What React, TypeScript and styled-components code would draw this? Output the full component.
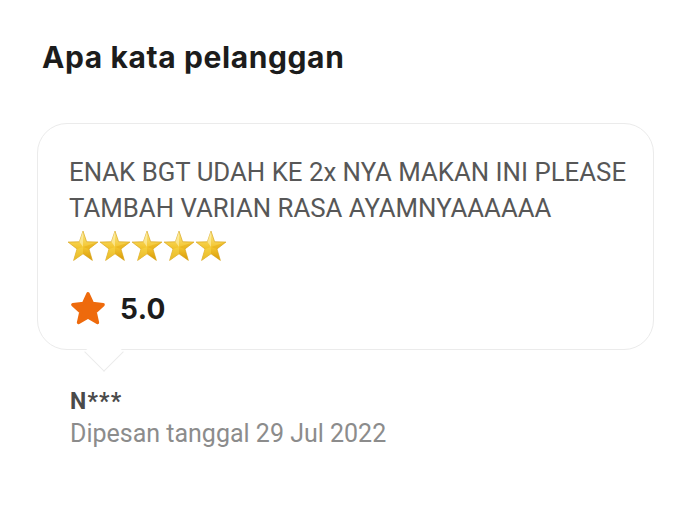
import React from 'react';
import styled, { createGlobalStyle } from 'styled-components';

const GlobalStyle = createGlobalStyle`
  html, body {
    margin: 0;
    padding: 0;
    background: #ffffff;
  }
  body {
    font-family: Roboto, "Liberation Sans", sans-serif;
  }
`;

const Page = styled.div`
  width: 689px;
  height: 517px;
  box-sizing: border-box;
  padding: 37px 35px 0 37px;
  display: flex;
  flex-direction: column;
`;

const Title = styled.h2`
  margin: 0 0 0 5px;
  font-family: Inter, "Noto Sans", sans-serif;
  font-weight: 700;
  font-size: 30px;
  line-height: 40px;
  letter-spacing: 0.6px;
  color: #1c1c1c;
`;

const Bubble = styled.div`
  position: relative;
  margin-top: 46px;
  box-sizing: border-box;
  height: 227px;
  border: 1.5px solid #ebebeb;
  border-radius: 30px;
  background: #fff;
  padding: 31px 16px 0 31px;
  display: flex;
  flex-direction: column;

  &::after {
    content: '';
    position: absolute;
    left: 52px;
    bottom: -17px;
    width: 28px;
    height: 28px;
    box-sizing: border-box;
    background: #fff;
    border-right: 1.5px solid #ebebeb;
    border-bottom: 1.5px solid #ebebeb;
    transform: rotate(45deg);
  }
`;

const ReviewText = styled.p`
  margin: 0;
  font-size: 25.8px;
  line-height: 35.5px;
  color: #575757;
`;

const StarRow = styled.div`
  display: flex;
  margin-top: 4px;
  margin-left: -2px;
`;

const RatingRow = styled.div`
  display: flex;
  align-items: center;
  gap: 12px;
  margin-top: 27px;
  margin-left: -1px;
`;

const RatingValue = styled.span`
  font-family: Inter, "Noto Sans", sans-serif;
  font-weight: 700;
  font-size: 28px;
  letter-spacing: 0.4px;
  color: #1c1c1c;
`;

const Reviewer = styled.div`
  margin: 38px 0 0 33px;
  display: flex;
  flex-direction: column;
  gap: 3px;
`;

const Name = styled.div`
  font-size: 23px;
  font-weight: 700;
  line-height: 28px;
  letter-spacing: 1.2px;
  color: #4a4a4a;
`;

const OrderDate = styled.div`
  font-size: 25px;
  line-height: 30px;
  color: #8c8c8c;
`;

const EmojiStar: React.FC<{ id: number }> = ({ id }) => (
  <svg width="32" height="32" viewBox="0 0 30 30">
    <defs>
      <linearGradient id={`g${id}`} x1="0" y1="0" x2="0" y2="1">
        <stop offset="0" stopColor="#fbe88a" />
        <stop offset="0.55" stopColor="#f3c631" />
        <stop offset="1" stopColor="#d99a05" />
      </linearGradient>
    </defs>
    <polygon
      points="15,1 18.4,11 29,11.3 20.6,17.8 23.8,28.5 15,22.3 6.2,28.5 9.4,17.8 1,11.3 11.6,11"
      fill={`url(#g${id})`}
      stroke="#d6a014"
      strokeWidth="0.6"
      strokeLinejoin="round"
    />
    <polygon points="15,1 15,16 11.6,11" fill="#fff6c0" opacity="0.55" />
    <polygon points="15,16 29,11.3 20.6,17.8" fill="#e4aa12" opacity="0.5" />
    <polygon points="15,16 15,22.3 6.2,28.5 9.4,17.8" fill="#f8d94e" opacity="0.5" />
  </svg>
);

const OrangeStar = () => (
  <svg width="40" height="40" viewBox="0 0 24 24">
    <path
      d="M12 2.8l2.7 5.9 6.4.7-4.8 4.4 1.4 6.3L12 16.9l-5.7 3.2 1.4-6.3-4.8-4.4 6.4-.7z"
      fill="#ee6a0c"
      stroke="#ee6a0c"
      strokeWidth="2"
      strokeLinejoin="round"
    />
  </svg>
);

export default function App() {
  return (
    <Page>
      <GlobalStyle />
      <Title>Apa kata pelanggan</Title>
      <Bubble>
        <ReviewText>
          ENAK BGT UDAH KE 2x NYA MAKAN INI PLEASE TAMBAH VARIAN RASA AYAMNYAAAAAA
        </ReviewText>
        <StarRow>
          {[0, 1, 2, 3, 4].map((i) => (
            <EmojiStar key={i} id={i} />
          ))}
        </StarRow>
        <RatingRow>
          <OrangeStar />
          <RatingValue>5.0</RatingValue>
        </RatingRow>
      </Bubble>
      <Reviewer>
        <Name>N***</Name>
        <OrderDate>Dipesan tanggal 29 Jul 2022</OrderDate>
      </Reviewer>
    </Page>
  );
}
